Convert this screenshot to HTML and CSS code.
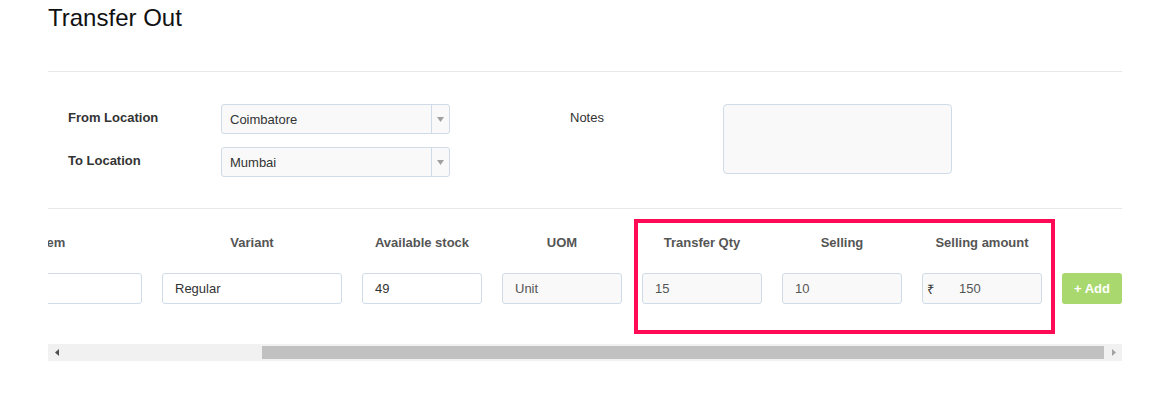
FILE: index.html
```html
<!DOCTYPE html>
<html lang="en">
<head>
<meta charset="utf-8">
<title>Transfer Out</title>
<link rel="stylesheet" href="styles.css">
</head>
<body>
<div class="page">
  <h1 class="title">Transfer Out</h1>

  <div class="form-section">
    <div class="loc-group">
      <div class="field-row">
        <label class="field-label">From Location</label>
        <div class="select">
          <span class="select-value">Coimbatore</span>
          <span class="select-arrow"><svg width="7" height="5" viewBox="0 0 7 5"><path d="M0 0h7L3.5 5z" fill="#a0a0a0"/></svg></span>
        </div>
      </div>
      <div class="field-row">
        <label class="field-label">To Location</label>
        <div class="select">
          <span class="select-value">Mumbai</span>
          <span class="select-arrow"><svg width="7" height="5" viewBox="0 0 7 5"><path d="M0 0h7L3.5 5z" fill="#a0a0a0"/></svg></span>
        </div>
      </div>
    </div>
    <div class="notes-group">
      <label class="field-label">Notes</label>
      <textarea class="notes"></textarea>
    </div>
  </div>

  <div class="items-section">
    <div class="items-viewport">
      <div class="items-row">
        <div class="col col-wide">
          <div class="col-head">Item</div>
          <input class="cell" type="text" value="">
        </div>
        <div class="col col-wide">
          <div class="col-head">Variant</div>
          <input class="cell" type="text" value="Regular">
        </div>
        <div class="col">
          <div class="col-head">Available stock</div>
          <input class="cell" type="text" value="49">
        </div>
        <div class="col">
          <div class="col-head">UOM</div>
          <input class="cell cell-ro" type="text" value="Unit">
        </div>
        <div class="col">
          <div class="col-head">Transfer Qty</div>
          <input class="cell cell-ro" type="text" value="15">
        </div>
        <div class="col">
          <div class="col-head">Selling</div>
          <input class="cell cell-ro" type="text" value="10">
        </div>
        <div class="col">
          <div class="col-head">Selling amount</div>
          <div class="cell cell-ro cell-amount">
            <span class="rupee">₹</span>
            <span class="amount">150</span>
          </div>
        </div>
        <div class="col col-btn">
          <div class="col-head"></div>
          <button class="add-btn" type="button">+ Add</button>
        </div>
      </div>
    </div>

    <div class="highlight"></div>

    <div class="scrollbar">
      <span class="sb-arrow"><svg width="4" height="7" viewBox="0 0 4 7"><path d="M4 0v7L0 3.5z" fill="#505050"/></svg></span>
      <div class="sb-track">
        <div class="sb-thumb" style="width: 81%"></div>
      </div>
      <span class="sb-arrow"><svg width="4" height="7" viewBox="0 0 4 7"><path d="M0 0v7L4 3.5z" fill="#a3a3a3"/></svg></span>
    </div>
  </div>
</div>
</body>
</html>
```

FILE: styles.css
```css
* { box-sizing: border-box; }

body {
  margin: 0;
  background: #ffffff;
  font-family: "Liberation Sans", Arial, sans-serif;
  color: #333333;
}

.page {
  padding: 0 42px 0 48px;
}

.title {
  margin: 4px 0 0;
  font-size: 24px;
  line-height: 28px;
  font-weight: normal;
  color: #111111;
  padding-bottom: 39px;
  border-bottom: 1px solid #e8e8e8;
}

.form-section {
  display: flex;
  padding: 32px 0 31px 20px;
}

.loc-group {
  width: 502px;
  display: flex;
  flex-direction: column;
  gap: 13px;
}

.field-row {
  display: flex;
}

.field-label {
  width: 153px;
  font-size: 13px;
  line-height: 28px;
  font-weight: bold;
  color: #333333;
}

.notes-group {
  display: flex;
}

.notes-group .field-label {
  font-weight: normal;
}

.select {
  width: 229px;
  height: 30px;
  display: flex;
  align-items: stretch;
  background: #f9f9f9;
  border: 1px solid #cfdbe6;
  border-radius: 3px;
}

.select-value {
  flex: 1;
  padding-left: 8px;
  font-size: 13px;
  line-height: 29px;
  color: #333333;
}

.select-arrow {
  width: 18px;
  border-left: 1px solid #cfdbe6;
  display: flex;
  align-items: center;
  justify-content: center;
}

.notes {
  width: 229px;
  height: 70px;
  margin: 0;
  background: #f9f9f9;
  border: 1px solid #cfdbe6;
  border-radius: 4px;
  resize: none;
  font-family: inherit;
}

.items-section {
  position: relative;
  border-top: 1px solid #e8e8e8;
  padding-top: 25px;
}

.items-viewport {
  overflow: hidden;
}

.items-row {
  display: flex;
  justify-content: flex-end;
  gap: 20px;
}

.col {
  flex: 0 0 120px;
  display: flex;
  flex-direction: column;
  align-items: stretch;
  gap: 21px;
}

.col-wide { flex-basis: 180px; }
.col-btn { flex-basis: 60px; }

.col-head {
  height: 18px;
  font-size: 13px;
  line-height: 18px;
  font-weight: bold;
  color: #555555;
  text-align: center;
  white-space: nowrap;
}

.cell {
  height: 31px;
  width: 100%;
  margin: 0;
  padding: 0 12px;
  border: 1px solid #cfdbe6;
  border-radius: 3px;
  background: #ffffff;
  font-family: inherit;
  font-size: 13px;
  color: #333333;
  outline: none;
}

.cell-ro {
  background: #f9f9f9;
  color: #555555;
}

.cell-amount {
  display: flex;
  align-items: center;
  padding: 0 0 0 4px;
}

.rupee {
  width: 32px;
  font-size: 13px;
  color: #333333;
}

.amount {
  font-size: 13px;
  color: #555555;
}

.add-btn {
  height: 31px;
  width: 100%;
  margin: 0;
  padding: 0;
  border: none;
  border-radius: 3px;
  background: #a8d86e;
  color: #ffffff;
  font-family: inherit;
  font-size: 13px;
  font-weight: bold;
}

.highlight {
  position: absolute;
  left: 586px;
  top: 10px;
  width: 421px;
  height: 115px;
  border: 4px solid #ff0a54;
  pointer-events: none;
}

.scrollbar {
  margin-top: 40px;
  height: 17px;
  display: flex;
  background: #f1f1f1;
}

.sb-arrow {
  width: 17px;
  display: flex;
  align-items: center;
  justify-content: center;
}

.sb-track {
  flex: 1;
  display: flex;
  justify-content: flex-end;
  align-items: center;
  padding-right: 1px;
}

.sb-thumb {
  height: 13px;
  background: #c1c1c1;
}
```
